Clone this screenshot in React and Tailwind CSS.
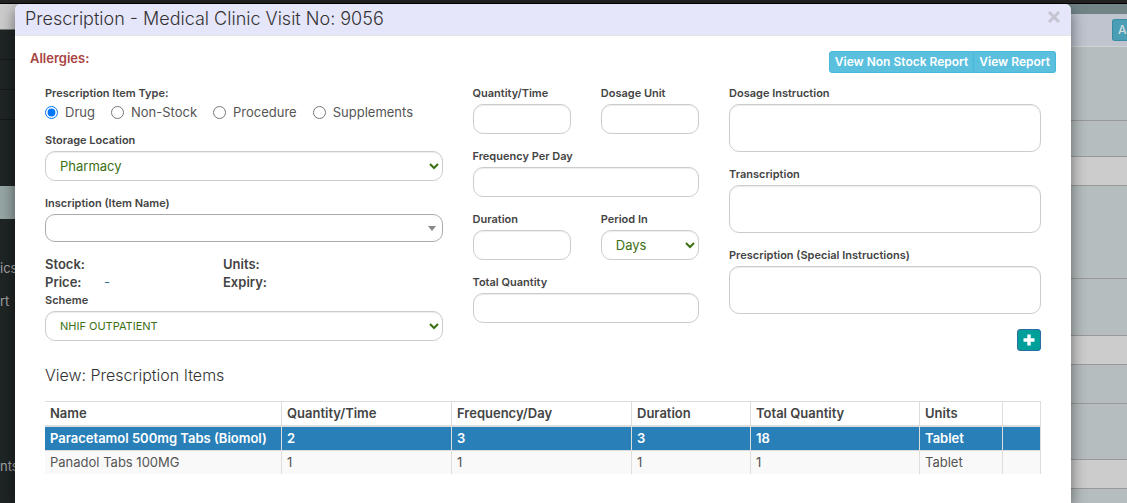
import React from 'react';

const control =
  'block w-full rounded-[10px] border border-[#ccc] bg-white shadow-[inset_0_1px_1px_rgba(0,0,0,0.075)] outline-none';
const labelText = 'block pb-1 text-[11px] leading-[14px] font-semibold text-[#444]';

function Field({ id, label, children, className = '' }) {
  return (
    <div className={className}>
      <label htmlFor={id} className={labelText}>
        {label}
      </label>
      {children}
    </div>
  );
}

function TextField({ id, label, className }) {
  return (
    <Field id={id} label={label} className={className}>
      <input id={id} type="text" className={`${control} h-[30px] px-3 text-xs`} />
    </Field>
  );
}

function SelectField({ id, label, value, className, size = 'text-[13px]' }) {
  return (
    <Field id={id} label={label} className={className}>
      <select id={id} className={`${control} h-[30px] pl-2.5 text-[#3c7014] ${size}`}>
        <option>{value}</option>
      </select>
    </Field>
  );
}

function AreaField({ id, label }) {
  return (
    <Field id={id} label={label}>
      <textarea id={id} className={`${control} h-12 resize-none px-3 py-1.5 text-xs`} />
    </Field>
  );
}

function ItemType({ label, checked }) {
  return (
    <label className="flex items-center gap-[7px]">
      <input type="radio" name="item-type" defaultChecked={checked} className="size-[13px]" />
      {label}
    </label>
  );
}

const headings = ['Name', 'Quantity/Time', 'Frequency/Day', 'Duration', 'Total Quantity', 'Units', ''];
const rows = [
  ['Paracetamol 500mg Tabs (Biomol)', '2', '3', '3', '18', 'Tablet', ''],
  ['Panadol Tabs 100MG', '1', '1', '1', '1', 'Tablet', ''],
];

function ItemsTable() {
  return (
    <table className="w-full table-fixed border-separate border-spacing-0 text-left text-[13px] leading-[23px]">
      <colgroup>
        <col className="w-[237px]" />
        <col className="w-[170px]" />
        <col className="w-[180px]" />
        <col className="w-[119px]" />
        <col className="w-[169px]" />
        <col className="w-[83px]" />
        <col className="w-[38px]" />
      </colgroup>
      <thead>
        <tr className="text-[#444]">
          {headings.map((h, i) => (
            <th key={i} className="border-t border-r border-b-2 border-[#ddd] px-[5px] py-0 font-semibold">
              {h}
            </th>
          ))}
        </tr>
      </thead>
      <tbody>
        {rows.map((row, r) => (
          <tr
            key={row[0]}
            className={r === 0 ? 'bg-[#2980b9] font-semibold text-white' : 'bg-[#f9f9f9] text-[#555]'}
          >
            {row.map((cell, i) => (
              <td
                key={i}
                className={`border-r border-[#ddd] px-[5px] py-0 whitespace-nowrap ${r === 0 ? 'border-b' : ''}`}
              >
                {cell}
              </td>
            ))}
          </tr>
        ))}
      </tbody>
    </table>
  );
}

function Backdrop() {
  return (
    <div className="flex min-h-screen flex-col" aria-hidden="true">
      <div className="h-1 border-b border-black bg-[#222]" />
      <div className="flex flex-1">
        <div className="w-40 bg-[#1f2425] text-[13px] leading-[33px] text-[#a3a6a6]">
          <div className="h-[26px] border-b border-[#6e7a76] bg-[#ccc]" />
          <div className="h-[30px] border-b border-[#151819]" />
          <div className="h-[30px] border-b border-[#151819]" />
          <div className="h-[30px] border-b border-[#151819]" />
          <div className="h-[66px]" />
          <div className="h-[33px] bg-[#96a6a5]" />
          <div className="h-[33px]" />
          <div>ics</div>
          <div>rt</div>
          <div className="h-[132px]" />
          <div>nts</div>
        </div>
        <div className="flex-1 bg-[#b5bdbe]">
          <div className="h-[10px] bg-[#728586]" />
          <div className="flex h-[33px] justify-end overflow-hidden border-b border-[#d0d3d6] bg-[#bfc4ce]">
            <div className="mt-[5px] h-[22px] w-[15px] overflow-hidden rounded-l-[3px] border border-r-0 border-[#378ba3] bg-[#499db5] pl-[5px] text-xs leading-5 font-medium text-[#d2dde0]">
              Ad
            </div>
          </div>
          <div className="h-[74px] border-b border-[#999]" />
          <div className="h-9 border-b border-[#999]" />
          <div className="h-[29px] border-b border-[#999] bg-[#ccc]" />
          <div className="h-[93px] border-b border-[#999]" />
          <div className="h-[57px] border-b border-[#999]" />
          <div className="h-[29px] border-b border-[#999] bg-[#ccc]" />
          <div className="h-[39px] border-b border-[#999]" />
          <div className="h-14 border-b border-[#999]" />
          <div className="h-[29px] border-b border-[#999] bg-[#ccc]" />
        </div>
      </div>
    </div>
  );
}

export default function App() {
  return (
    <div className="relative h-screen overflow-hidden font-['Inter','Open_Sans',sans-serif] text-[#444]">
      <Backdrop />
      <div className="absolute inset-0 pt-1 pr-14 pl-[15px]">
        <div
          role="dialog"
          aria-labelledby="dialog-title"
          className="min-h-full overflow-hidden rounded-t-md bg-white shadow-[0_5px_15px_rgba(0,0,0,0.5)]"
        >
          <header className="flex h-8 items-center justify-between border-b border-[#e5e5e5] bg-[#e6e6fa] px-2.5">
            <h1 id="dialog-title" className="pb-0.5 text-lg leading-7 font-light text-[#333]">
              Prescription - Medical Clinic Visit No: 9056
            </h1>
            <button type="button" aria-label="Close" className="flex h-7 items-start pt-1 text-[#c4c4d3]">
              <svg width="14" height="14" viewBox="0 0 14 14" stroke="currentColor" strokeWidth="3">
                <path d="M2 2l10 10M12 2L2 12" />
              </svg>
            </button>
          </header>

          <div className="px-[15px] pt-[15px]">
            <div className="flex items-start justify-between">
              <p className="text-[13px] leading-[14px] font-semibold text-[#a94442]">Allergies:</p>
              <div className="flex text-xs leading-5 font-semibold text-white">
                <button type="button" className="rounded-l-[3px] border border-[#46b8da] bg-[#5bc0de] px-[5px]">
                  View Non Stock Report
                </button>
                <button
                  type="button"
                  className="rounded-r-[3px] border border-l-0 border-[#46b8da] bg-[#5bc0de] px-[5px]"
                >
                  View Report
                </button>
              </div>
            </div>

            <form className="grid grid-cols-12 gap-x-[30px] px-[15px] pt-[13px]">
              <div className="col-span-5">
                <fieldset>
                  <legend className={labelText}>Prescription Item Type:</legend>
                  <div className="flex gap-4 pb-[13px] text-[13px] leading-4 text-[#555]">
                    <ItemType label="Drug" checked />
                    <ItemType label="Non-Stock" />
                    <ItemType label="Procedure" />
                    <ItemType label="Supplements" />
                  </div>
                </fieldset>
                <SelectField id="storage" label="Storage Location" value="Pharmacy" className="pb-[15px]" />
                <Field id="item" label="Inscription (Item Name)">
                  <div className="relative">
                    <select
                      id="item"
                      className="block h-7 w-full appearance-none rounded-[10px] border border-[#aaa] bg-white px-2 text-xs"
                    >
                      <option></option>
                    </select>
                    <svg
                      width="8"
                      height="5"
                      viewBox="0 0 8 5"
                      className="pointer-events-none absolute top-3 right-[7px]"
                    >
                      <path d="M0 0h8L4 5z" fill="#888" />
                    </svg>
                  </div>
                </Field>
                <dl className="grid grid-cols-[59px_119px_59px_1fr] pt-[13px] pb-0.5 text-[13px] leading-[18px] [&>dt]:font-semibold">
                  <dt>Stock:</dt>
                  <dd />
                  <dt>Units:</dt>
                  <dd />
                  <dt>Price:</dt>
                  <dd className="text-[#31708f]">-</dd>
                  <dt>Expiry:</dt>
                  <dd />
                </dl>
                <SelectField id="scheme" label="Scheme" value="NHIF OUTPATIENT" size="text-[11px]" />
              </div>

              <div className="col-span-3 grid grid-cols-2 content-start gap-x-[30px] gap-y-[15px]">
                <TextField id="quantity" label="Quantity/Time" />
                <TextField id="dosage-unit" label="Dosage Unit" />
                <TextField id="frequency" label="Frequency Per Day" className="col-span-2" />
                <TextField id="duration" label="Duration" />
                <SelectField id="period" label="Period In" value="Days" />
                <TextField id="total" label="Total Quantity" className="col-span-2" />
              </div>

              <div className="col-span-4 flex flex-col gap-[15px]">
                <AreaField id="dosage" label="Dosage Instruction" />
                <AreaField id="transcription" label="Transcription" />
                <AreaField id="special" label="Prescription (Special Instructions)" />
                <button
                  type="button"
                  aria-label="Add item"
                  className="flex h-[22px] w-6 items-center justify-center self-end rounded-[3px] border border-[#2e6da4] bg-[#009f9a] text-white"
                >
                  <svg width="12" height="12" viewBox="0 0 12 12" fill="currentColor">
                    <path d="M4.3 0.5h3.4v3.8h3.8v3.4H7.7v3.8H4.3V7.7H0.5V4.3h3.8z" />
                  </svg>
                </button>
              </div>
            </form>

            <section className="px-[15px] pt-3.5">
              <h2 className="pb-4 text-base leading-5 font-light text-[#333]">View: Prescription Items</h2>
              <ItemsTable />
            </section>
          </div>
        </div>
      </div>
    </div>
  );
}
